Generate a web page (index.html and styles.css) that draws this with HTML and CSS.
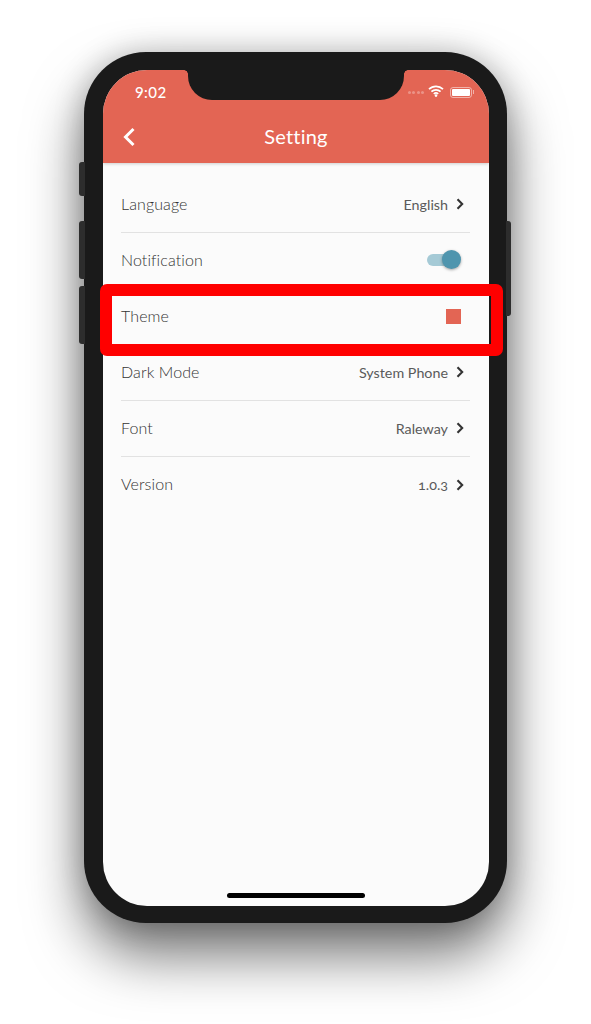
FILE: index.html
```html
<!DOCTYPE html>
<html lang="en">
<head>
<meta charset="utf-8">
<title>Setting</title>
<link rel="stylesheet" href="styles.css">
</head>
<body>
<div class="phone">
  <span class="side-btn btn-mute"></span>
  <span class="side-btn btn-up"></span>
  <span class="side-btn btn-down"></span>
  <span class="side-btn btn-power"></span>
  <div class="screen">
    <div class="notch"></div>
    <header class="app-header">
      <div class="status-bar">
        <span class="time">9:02</span>
        <div class="status-icons">
          <span class="signal"><i></i><i></i><i></i><i></i></span>
          <svg class="wifi" width="16" height="12" viewBox="0 0 16 12"><path d="M1 4.2a10 10 0 0 1 14 0M3.4 6.7a6.6 6.6 0 0 1 9.2 0M5.8 9a3.2 3.2 0 0 1 4.4 0" fill="none" stroke="#fff" stroke-width="1.7"/><circle cx="8" cy="10.6" r="1.3" fill="#fff"/></svg>
          <span class="battery"><span class="battery-fill"></span></span>
        </div>
      </div>
      <div class="title-bar">
        <svg class="back" width="14" height="20" viewBox="0 0 14 20"><path d="M11.5 2 3.5 10l8 8" fill="none" stroke="#fff" stroke-width="3"/></svg>
        <h1 class="title">Setting</h1>
      </div>
    </header>
    <main class="list">
      <div class="row"><span class="label">Language</span><div class="value"><span>English</span><svg class="chev" width="8" height="12" viewBox="0 0 8 12"><path d="M1.5 1.2 6.2 6l-4.7 4.8" fill="none" stroke="#333" stroke-width="2.1"/></svg></div></div>
      <div class="row"><span class="label">Notification</span><div class="toggle"><span class="track"></span><span class="thumb"></span></div></div>
      <div class="row"><span class="label">Theme</span><span class="swatch"></span></div>
      <div class="row"><span class="label">Dark Mode</span><div class="value"><span>System Phone</span><svg class="chev" width="8" height="12" viewBox="0 0 8 12"><path d="M1.5 1.2 6.2 6l-4.7 4.8" fill="none" stroke="#333" stroke-width="2.1"/></svg></div></div>
      <div class="row"><span class="label">Font</span><div class="value"><span>Raleway</span><svg class="chev" width="8" height="12" viewBox="0 0 8 12"><path d="M1.5 1.2 6.2 6l-4.7 4.8" fill="none" stroke="#333" stroke-width="2.1"/></svg></div></div>
      <div class="row last"><span class="label">Version</span><div class="value"><span class="nums">1.0.3</span><svg class="chev" width="8" height="12" viewBox="0 0 8 12"><path d="M1.5 1.2 6.2 6l-4.7 4.8" fill="none" stroke="#333" stroke-width="2.1"/></svg></div></div>
    </main>
    <div class="home-bar"></div>
  </div>
  <div class="highlight"></div>
</div>
</body>
</html>
```
FILE: styles.css
```css
* { box-sizing: border-box; }
html, body { margin: 0; height: 1024px; overflow: hidden; background: #fff; }
body { font-family: Lato, "Open Sans", sans-serif; padding: 52px 0 0 84px; }

.phone {
  position: relative;
  width: 423px;
  height: 871px;
  padding: 18px 18px 17px 19px;
  background: #1a1a1a;
  border-radius: 62px;
  box-shadow: 0 32px 56px rgba(0,0,0,.55), 0 0 30px rgba(0,0,0,.22);
}
.side-btn { position: absolute; width: 6px; background: #2d2d2d; }
.btn-mute { left: -5px; top: 110px; height: 34px; border-radius: 3px 0 0 3px; }
.btn-up { left: -5px; top: 169px; height: 58px; border-radius: 3px 0 0 3px; }
.btn-down { left: -5px; top: 234px; height: 58px; border-radius: 3px 0 0 3px; }
.btn-power { right: -4px; top: 169px; height: 95px; width: 5px; border-radius: 0 3px 3px 0; }

.screen {
  position: relative;
  height: 836px;
  background: #fbfbfb;
  border-radius: 44px;
  overflow: hidden;
}
.notch {
  position: absolute;
  z-index: 1;
  left: 85px;
  top: 0;
  width: 216px;
  height: 30px;
  background: #1a1a1a;
  border-radius: 0 0 24px 24px;
}
.notch::before, .notch::after {
  content: "";
  position: absolute;
  top: 0;
  width: 4px;
  height: 4px;
  background: radial-gradient(circle at 0 100%, transparent 3.5px, #1a1a1a 4px);
}
.notch::before { left: -4px; }
.notch::after { right: -4px; transform: scaleX(-1); }
.app-header {
  height: 93px;
  background: #e36554;
  box-shadow: 0 1px 3px rgba(0,0,0,.18);
  color: #fff;
  position: relative;
}
.status-bar {
  height: 42px;
  padding: 2px 17px 0 32px;
  display: flex;
  justify-content: space-between;
  align-items: center;
}
.time { font-size: 15px; font-weight: 500; letter-spacing: .4px; }
.status-icons { display: flex; align-items: center; gap: 4px; }
.signal { display: flex; gap: 1.5px; }
.signal i { width: 3px; height: 3px; border-radius: 50%; background: rgba(255,255,255,.3); }
.wifi { margin-top: -2px; }
.battery {
  position: relative;
  width: 22px;
  height: 11px;
  margin-left: 2px;
  padding: 1px;
  border: 1px solid rgba(255,255,255,.5);
  border-radius: 3px;
  display: flex;
}
.battery::after {
  content: "";
  position: absolute;
  right: -3px;
  top: 2px;
  width: 1px;
  height: 4px;
  background: rgba(255,255,255,.5);
}
.battery-fill { flex: 1; background: #fff; border-radius: 1px; }
.title-bar {
  position: relative;
  height: 48px;
  display: flex;
  align-items: center;
  justify-content: center;
}
.back { position: absolute; left: 19px; top: 15px; }
.title { margin: 0; font-size: 20px; font-weight: 400; letter-spacing: .2px; }

.list { padding: 14px 19px 0 18px; }
.row {
  height: 56px;
  display: flex;
  align-items: center;
  justify-content: space-between;
  padding-bottom: 1px;
  padding-right: 6px;
  border-bottom: 1px solid #e2e2e2;
}
.row.last { border-bottom: 0; }
.label { margin-bottom: 2px; font-size: 16px; font-weight: 300; color: #333; letter-spacing: .1px; }
.value { display: flex; align-items: center; gap: 8px; font-size: 14.3px; color: #5a5a5a; }
.nums { font-variant-numeric: oldstyle-nums; }
.chev { display: block; }
.swatch { width: 15px; height: 15px; margin-right: 3px; background: #e36554; }
.toggle { position: relative; width: 34px; height: 20px; margin-right: 3px; }
.track {
  position: absolute;
  left: 0;
  top: 4px;
  width: 30px;
  height: 12px;
  border-radius: 6px;
  background: #a5cad6;
}
.thumb {
  position: absolute;
  right: 0;
  top: 0;
  width: 19px;
  height: 19px;
  border-radius: 50%;
  background: #4f95ae;
  box-shadow: 0 1px 3px rgba(0,0,0,.35);
}
.home-bar {
  position: absolute;
  left: 124px;
  bottom: 8px;
  width: 138px;
  height: 5px;
  border-radius: 3px;
  background: #000;
}
.highlight {
  position: absolute;
  left: 16px;
  top: 232px;
  width: 403px;
  height: 72px;
  border: 12px solid #f00;
  border-radius: 7px;
}
```
